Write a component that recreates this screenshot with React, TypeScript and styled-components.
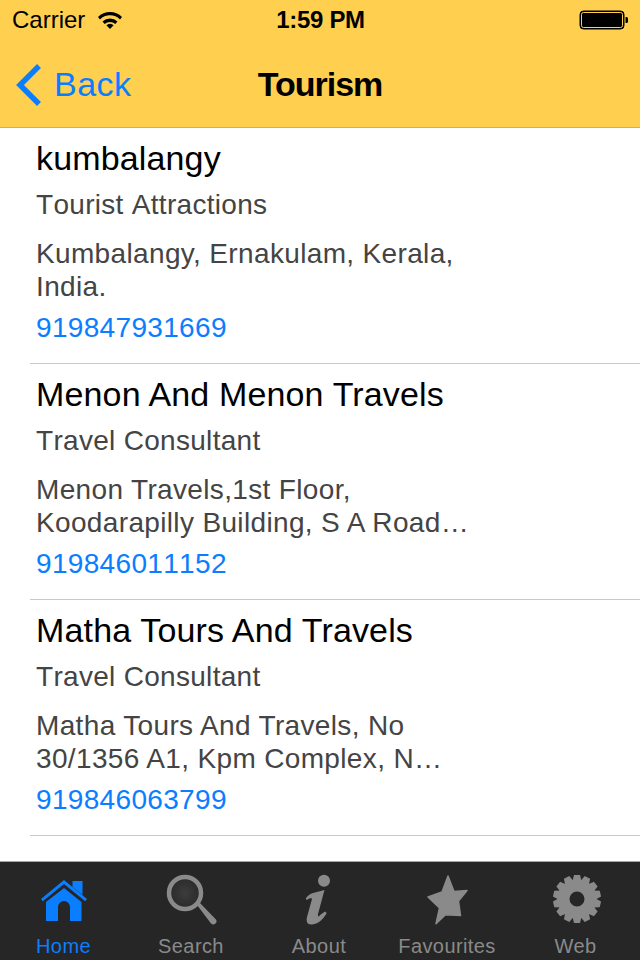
import styled, { createGlobalStyle } from "styled-components";

const GlobalStyle = createGlobalStyle`
  html, body {
    margin: 0;
    padding: 0;
    background: #ffffff;
  }
  body {
    font-family: "Liberation Sans", Arial, sans-serif;
  }
`;

const Screen = styled.div`
  width: 640px;
  height: 960px;
  display: flex;
  flex-direction: column;
  overflow: hidden;
  background: #ffffff;
`;

const Header = styled.header`
  height: 128px;
  box-sizing: border-box;
  flex: none;
  background: #ffd050;
  border-bottom: 1px solid #b4b0a4;
`;

const StatusBar = styled.div`
  height: 40px;
  display: grid;
  grid-template-columns: 1fr auto 1fr;
  align-items: center;
  padding: 0 11px 0 12px;
  color: #000;
  font-size: 24px;
`;

const StatusLeft = styled.div`
  display: flex;
  align-items: center;
  gap: 12px;
`;

const StatusTime = styled.div`
  font-weight: 700;
  letter-spacing: -0.3px;
`;

const StatusRight = styled.div`
  display: flex;
  justify-content: flex-end;
`;

const NavBar = styled.div`
  height: 87px;
  box-sizing: border-box;
  display: grid;
  grid-template-columns: 1fr auto 1fr;
  align-items: center;
  padding: 2px 16px 0;
`;

const BackLink = styled.div`
  display: flex;
  align-items: center;
  gap: 12px;
  color: #0a7eff;
  font-size: 34px;
  letter-spacing: 0.5px;
`;

const Title = styled.h1`
  margin: 0;
  font-size: 34px;
  font-weight: 700;
  letter-spacing: -1px;
  color: #000;
`;

const List = styled.main`
  flex: 1;
  padding-left: 30px;
`;

const Row = styled.article`
  height: 236px;
  box-sizing: border-box;
  border-bottom: 1px solid #c8c7cc;
  padding: 8px 0 0 6px;
`;

const Name = styled.div`
  font-size: 34px;
  line-height: 44px;
  letter-spacing: 0.15px;
  color: #000;
`;

const Category = styled.div`
  font-size: 28px;
  line-height: 32px;
  font-kerning: none;
  letter-spacing: 0.3px;
  margin-top: 9px;
  color: #444;
`;

const Address = styled.div`
  width: 460px;
  font-size: 28px;
  line-height: 33px;
  letter-spacing: 0.35px;
  margin-top: 16px;
  color: #444;
`;

const Phone = styled.div`
  font-size: 28px;
  line-height: 32px;
  font-kerning: none;
  letter-spacing: 0.33px;
  margin-top: 9px;
  color: #0a7eff;
`;

const TabBar = styled.nav`
  height: 99px;
  flex: none;
  box-sizing: border-box;
  background: #262626;
  border-top: 1px solid #a8a8a8;
  display: grid;
  grid-template-columns: 127px 128px 128px 128px 129px;
`;

const Tab = styled.div<{ $active?: boolean }>`
  display: flex;
  flex-direction: column;
  align-items: center;
  color: ${({ $active }) => ($active ? "#0a7eff" : "#8a8a8a")};
  font-size: 20px;
  letter-spacing: 0.4px;
`;

const TabIcon = styled.svg`
  width: 64px;
  height: 64px;
  margin-top: 6px;
  flex: none;
`;

const TabLabel = styled.div`
  line-height: 24px;
  margin-top: 2px;
`;

const WifiIcon = () => (
  <svg width="26" height="20" viewBox="0 0 26 20">
    <path d="M1 7a17 17 0 0 1 24 0l-2 2.4a14 14 0 0 0-20 0z" fill="#000" />
    <path d="M5.5 11.5a11 11 0 0 1 15 0l-2.2 2.4a8 8 0 0 0-10.6 0z" fill="#000" />
    <path d="M13 19l-3.6-3.8a5 5 0 0 1 7.2 0z" fill="#000" />
  </svg>
);

const BatteryIcon = () => (
  <svg width="50" height="20" viewBox="0 0 50 20">
    <rect x="1" y="1" width="44" height="18" rx="3.5" fill="#000" stroke="#000" strokeWidth="1" />
    <rect x="2.5" y="2.5" width="41" height="15" rx="2" fill="#000" stroke="#ffd050" strokeWidth="1" />
    <path d="M46.5 7h1a1.5 1.5 0 0 1 1.5 1.5v3a1.5 1.5 0 0 1-1.5 1.500h-1z" fill="#000" />
  </svg>
);

const BackChevron = () => (
  <svg width="26" height="44" viewBox="0 0 26 44">
    <path d="M23 3L4 22l19 19" fill="none" stroke="#0a7eff" strokeWidth="5.5" />
  </svg>
);

const HomeGlyph = () => (
  <TabIcon viewBox="0 0 64 64">
    <path d="M40.500 13h10v14l-10-8z" fill="currentColor" />
    <path d="M9 31L32 12l23 19-1.800 2.200L32 16 10.800 33.200z" fill="currentColor" />
    <path
      d="M32 20l17.500 14v19H38V39a6 6 0 0 0-12 0v14H14V34z"
      fill="currentColor"
    />
  </TabIcon>
);

const SearchGlyph = () => (
  <TabIcon viewBox="0 0 64 64">
    <defs>
      <radialGradient id="lens">
        <stop offset="0" stopColor="#3c3c3c" />
        <stop offset="1" stopColor="#2a2a2a" />
      </radialGradient>
    </defs>
    <circle cx="26" cy="25" r="16" fill="url(#lens)" stroke="currentColor" strokeWidth="4.5" />
    <path d="M38 37l2.500-2.500L56.500 51a3 3 0 0 1-4.500 4.500z" fill="currentColor" />
  </TabIcon>
);

const AboutGlyph = () => (
  <TabIcon viewBox="0 0 64 64">
    <circle cx="37" cy="12.700" r="6" fill="currentColor" />
    <path
      d="M18.700 31C21 26 26 25 28 24.500L37.500 22 31 46c-.5 3 1 3 2 1l5-3.500 1.700 1.500C37 50 32 56 25 56.500c-5 .5-6-3.500-5-7.500l5-18c0-1.500-3-1-5 1z"
      fill="currentColor"
    />
  </TabIcon>
);

const StarGlyph = () => (
  <TabIcon viewBox="0 0 64 64">
    <path
      d="M33 8l6 15.500L52 22.500 43.500 33l2 14.500-15-.7L21 55.700 24.500 40 13 29l14-5z"
      fill="currentColor"
      stroke="currentColor"
      strokeWidth="1.500"
      strokeLinejoin="round"
    />
  </TabIcon>
);

const gearTeeth = Array.from({ length: 14 }, (_, i) => (i * 360) / 14);

const GearGlyph = () => (
  <TabIcon viewBox="0 0 64 64">
    <path
      fillRule="evenodd"
      d="M33 11.500a19.500 19.500 0 1 0 0 39 19.500 19.500 0 0 0 0-39zm0 12a7.500 7.500 0 1 1 0 15 7.500 7.500 0 0 1 0-15z"
      fill="currentColor"
    />
    {gearTeeth.map((angle) => (
      <path
        key={angle}
        d="M30 7h6l1.500 6h-9z"
        fill="currentColor"
        transform={`rotate(${angle} 33 31)`}
      />
    ))}
  </TabIcon>
);

const listings = [
  {
    name: "kumbalangy",
    category: "Tourist Attractions",
    address: ["Kumbalangy, Ernakulam, Kerala,", "India."],
    phone: "919847931669",
  },
  {
    name: "Menon And Menon Travels",
    category: "Travel Consultant",
    address: ["Menon Travels,1st Floor,", "Koodarapilly Building, S A Road…"],
    phone: "919846011152",
  },
  {
    name: "Matha Tours And Travels",
    category: "Travel Consultant",
    address: ["Matha Tours And Travels, No", "30/1356 A1, Kpm Complex, N…"],
    phone: "919846063799",
  },
];

const App = () => {
  return (
    <Screen>
      <GlobalStyle />
      <Header>
        <StatusBar>
          <StatusLeft>
            Carrier
            <WifiIcon />
          </StatusLeft>
          <StatusTime>1:59 PM</StatusTime>
          <StatusRight>
            <BatteryIcon />
          </StatusRight>
        </StatusBar>
        <NavBar>
          <BackLink>
            <BackChevron />
            Back
          </BackLink>
          <Title>Tourism</Title>
        </NavBar>
      </Header>
      <List>
        {listings.map((item) => (
          <Row key={item.name}>
            <Name>{item.name}</Name>
            <Category>{item.category}</Category>
            <Address>
              {item.address.map((line) => (
                <div key={line}>{line}</div>
              ))}
            </Address>
            <Phone>{item.phone}</Phone>
          </Row>
        ))}
      </List>
      <TabBar>
        <Tab $active>
          <HomeGlyph />
          <TabLabel>Home</TabLabel>
        </Tab>
        <Tab>
          <SearchGlyph />
          <TabLabel>Search</TabLabel>
        </Tab>
        <Tab>
          <AboutGlyph />
          <TabLabel>About</TabLabel>
        </Tab>
        <Tab>
          <StarGlyph />
          <TabLabel>Favourites</TabLabel>
        </Tab>
        <Tab>
          <GearGlyph />
          <TabLabel>Web</TabLabel>
        </Tab>
      </TabBar>
    </Screen>
  );
};

export default App;
